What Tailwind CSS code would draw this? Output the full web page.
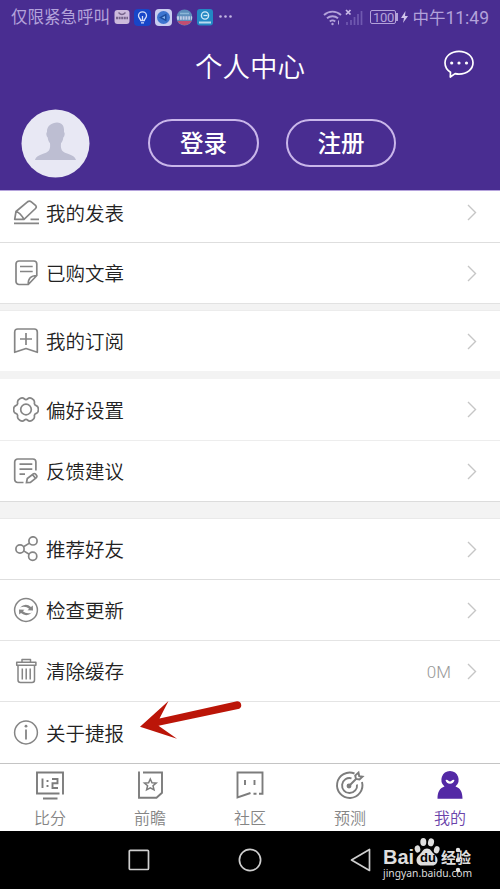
<!DOCTYPE html>
<html lang="zh-CN">
  <head>
    <meta charset="UTF-8" />
    <meta name="viewport" content="width=device-width, initial-scale=1.0" />
    <title>个人中心</title>
    <script src="https://cdn.jsdelivr.net/npm/@tailwindcss/browser@4"></script>
  </head>
  <body class="bg-black font-['Roboto','Noto_Sans_CJK_SC',sans-serif]">
    <div class="w-[500px] h-[889px] flex flex-col overflow-hidden">
      <!-- Header -->
      <header class="h-[190px] shrink-0 bg-[#492d91] text-white">
        <!-- Status bar -->
        <div class="h-[34px] pl-[11px] pr-[11px] flex items-center justify-between text-[#b3a2da] text-[16.5px] leading-none">
          <div class="flex items-center gap-[4px]">
            <span class="whitespace-nowrap pt-[3px]">仅限紧急呼叫</span>
            <svg class="w-4 h-4" viewBox="0 0 16 16">
              <rect x="0.5" y="1" width="15" height="14" rx="3" fill="#cdbbdc" />
              <path d="M4.500 3.500q3.500 4 7 0" fill="none" stroke="#77658c" stroke-width="1.300" />
              <path d="M2 9h12" stroke="#75638a" stroke-width="2.500" stroke-dasharray="2 .6" />
            </svg>
            <svg class="w-[17px] h-[17px]" viewBox="0 0 17 17">
              <rect width="17" height="17" rx="4" fill="#1746c8" />
              <path d="M6.700 11.500C6.700 9.800 4.500 9 4.500 6.800a4 4 0 0 1 8 0c0 2.200-2.200 3-2.200 4.700zM7 13.800h3M8.500 7v4" fill="none" stroke="#d5ddfa" stroke-width="1.300" />
            </svg>
            <svg class="w-[17px] h-[17px]" viewBox="0 0 17 17">
              <rect width="17" height="17" rx="4" fill="#c9cdf0" />
              <circle cx="8.500" cy="8.500" r="6.500" fill="#3d74cf" />
              <path d="M4 8.500 11.500 4.500v8z" fill="#1f4d9f" />
              <path d="M7 8.500l3-1.500v3z" fill="#86b3ef" />
            </svg>
            <svg class="w-[17px] h-[17px]" viewBox="0 0 17 17">
              <circle cx="8.500" cy="8.500" r="8" fill="#5d8dbb" />
              <path d="M1.500 12a8 8 0 0 0 14 0z" fill="#c14d72" />
              <path d="M1 9h15" stroke="#c0cce6" stroke-width="3.500" stroke-dasharray="2 .8" />
              <path d="M4 4.500h9" stroke="#8bb7d8" stroke-width="1.500" />
            </svg>
            <svg class="w-4 h-[17px]" viewBox="0 0 16 17">
              <rect width="16" height="16.500" rx="3" fill="#2388c4" />
              <circle cx="8" cy="6.500" r="3.600" fill="none" stroke="#cfeaf8" stroke-width="1.400" />
              <path d="M6.500 6.500h4" stroke="#cfeaf8" stroke-width="1.300" />
              <path d="M2 13.500h12" stroke="#b8daf0" stroke-width="2" />
            </svg>
            <svg class="w-[16px] h-4" viewBox="0 0 16 16" fill="#c3b5e3">
              <circle cx="3.500" cy="7.500" r="1.300" />
              <circle cx="8.500" cy="7.500" r="1.300" />
              <circle cx="13.500" cy="7.500" r="1.300" />
            </svg>
          </div>
          <div class="flex items-center">
            <svg class="w-[19px] h-[17px] mr-[3px]" viewBox="0 0 19 17" fill="none" stroke="currentColor" stroke-width="1.900">
              <path d="M1 6a12.500 12.500 0 0 1 17 0M4 9.300a8.300 8.300 0 0 1 11 0M6.800 12.500a4.200 4.200 0 0 1 5.400 0" />
              <circle cx="9.500" cy="15" r="1.200" fill="currentColor" stroke="none" />
              <path d="M15.500 11.500v4" stroke-width="1" />
            </svg>
            <svg class="w-[18px] h-[17px] mr-[7px]" viewBox="0 0 18 17" fill="none">
              <path d="M1 1l4.500 4.500M5.500 1 1 5.500" stroke="#cabce8" stroke-width="1.700" />
              <path d="M2 16v-3M6 16v-5M9.500 16V8M13 16V5M16.500 16V2" stroke="#7059b0" stroke-width="1.700" />
            </svg>
            <span class="w-[26px] h-[14px] border border-current rounded-[2px] flex items-center justify-center text-[13px] tracking-[-0.3px]">100</span>
            <span class="w-[2px] h-[8px] bg-current"></span>
            <svg class="w-[7px] h-[12px] ml-[3px] mr-[4px]" viewBox="0 0 7 12" fill="#d0c4ea">
              <path d="M4.500 0 0 7h3L2 12l5-7H4z" />
            </svg>
            <span class="whitespace-nowrap text-[17.5px] pt-[3px]"><span class="text-[16.500px]">中午</span>11:49</span>
          </div>
        </div>

        <!-- Title -->
        <div class="h-[64px] grid grid-cols-[1fr_auto_1fr] items-center pr-[26px]">
          <span></span>
          <h1 class="text-[27.5px] leading-none pl-[26px] pt-[3px] whitespace-nowrap font-[350]">个人中心</h1>
          <svg class="w-[30px] h-[28px] justify-self-end -mt-[5px]" viewBox="0 0 30 28" fill="none" stroke="#fff" stroke-width="1.700">
            <path d="M6.500 22.300C2.900 20 1 16.500 1 12.800 1 6.300 7 1.300 15 1.300s14 5 14 11.500-6 11.300-14 11.300c-1.500 0-2.700-.2-3.900-.5L6.300 27z" stroke-linejoin="round" />
            <g fill="#fff" stroke="none">
              <circle cx="7.700" cy="13" r="1.600" />
              <circle cx="15" cy="13" r="1.600" />
              <circle cx="22.500" cy="13" r="1.600" />
            </g>
          </svg>
        </div>

        <!-- Account -->
        <div class="h-[90px] flex items-center pl-[21px]">
          <svg class="w-[69px] h-[69px]" viewBox="0 0 69 69">
            <circle cx="34.500" cy="34.500" r="34" fill="#e8e8f4" />
            <path d="M36 13.500c5 0 7.500 3.500 7 9.500 1.200 1 .8 4-.7 5.500-.3 3-1.300 4.500-2.300 5.700-.5 5 .5 8 4 9.500 6 2 10 3.500 11 7.300H14c1-3.800 5-5.300 11-7.300 3.500-1.500 4.500-4.500 4-9.500-1-1.200-2-2.700-2.300-5.700-1.500-1.500-1.900-4.500-.7-5.500-.5-6 5-9.500 10-9.500z" fill="#bdbed2" />
          </svg>
          <button class="ml-[58px] w-[111px] h-[48px] rounded-full border-2 border-[#c9b6ea] text-[23.5px] leading-none font-medium flex items-center justify-center pt-[4px]">登录</button>
          <button class="ml-[27px] w-[110px] h-[48px] rounded-full border-2 border-[#c9b6ea] text-[23.5px] leading-none font-medium flex items-center justify-center pt-[4px]">注册</button>
        </div>
      </header>

      <!-- Menu -->
      <main class="h-[573px] shrink-0 bg-[#f3f3f3] text-[19.5px] leading-none text-[#222] font-[350]">
        <section class="bg-white">
          <a class="h-[53px] pl-[13px] pr-[22px] pb-[8px] flex items-center border-t border-t-[#b5a3dc] border-b border-b-[#dedede]">
            <svg class="w-[26px] h-[26px] mr-[7px]" viewBox="0 0 26 26" fill="none" stroke="#858585" stroke-width="1.700" stroke-linejoin="round">
              <path d="M1.700 19.300 3 11.500 14.500 1.800q2-1.500 3.800 0l4.200 3.500q1.500 1.700 0 3.200L11 19.300zM3 11.500q4 1 8 7.800M1 23.300h25M17.500 19.300H26" />
            </svg>
            <span class="grow pt-[4px]">我的发表</span>
            <svg class="w-[10px] h-[17px] mr-px" viewBox="0 0 10 17" fill="none" stroke="#c6c6c6" stroke-width="1.400"><path d="M1 1l7.500 7.500L1 16" /></svg>
          </a>
          <a class="h-[61px] pl-[13px] pr-[22px] flex items-center border-b border-b-[#e2e2e2]">
            <svg class="w-[26px] h-[26px] mr-[7px]" viewBox="0 0 26 26" fill="none" stroke="#858585" stroke-width="1.700">
              <path d="M15.300 24.500H6a3 3 0 0 1-3-3V4a3 3 0 0 1 3-3h14.800a3 3 0 0 1 3 3v11.500zq-.5-9 8.500-9M7 6.500h12.700M7 11.500h12.700" />
            </svg>
            <span class="grow pt-[4px]">已购文章</span>
            <svg class="w-[10px] h-[17px] mr-px" viewBox="0 0 10 17" fill="none" stroke="#c6c6c6" stroke-width="1.400"><path d="M1 1l7.500 7.500L1 16" /></svg>
          </a>
        </section>

        <section class="mt-[6px] bg-white border-t border-t-[#ececec]">
          <a class="h-[60px] pl-[13px] pr-[22px] flex items-center">
            <svg class="w-[26px] h-[26px] mr-[7px]" viewBox="0 0 26 26" fill="none" stroke="#858585" stroke-width="1.700" stroke-linejoin="round">
              <path d="M1.700 24.300V4q0-3 3-3h16.600q3 0 3 3v20.300L13 20.500zM13 5v12M7 11h12" />
            </svg>
            <span class="grow pt-[4px]">我的订阅</span>
            <svg class="w-[10px] h-[17px] mr-px" viewBox="0 0 10 17" fill="none" stroke="#c6c6c6" stroke-width="1.400"><path d="M1 1l7.500 7.500L1 16" /></svg>
          </a>
        </section>

        <section class="mt-[8px] bg-white">
          <a class="h-[62px] pl-[13px] pr-[22px] flex items-center border-b border-b-[#ededed]">
            <svg class="w-[26px] h-[26px] mr-[7px]" viewBox="0 0 26 26" fill="none" stroke="#858585" stroke-width="1.700">
              <g transform="translate(13 12.500)">
                <path d="M10.200-3.850Q12.420-3.100 12.420 0Q12.420 3.100 10.200 3.850Q7.970 4.600 8.430 6.900Q8.890 9.210 6.210 10.750Q3.530 12.300 1.760 10.750Q0 9.200-1.760 10.750Q-3.530 12.300-6.210 10.750Q-8.890 9.210-8.430 6.900Q-7.970 4.600-10.200 3.850Q-12.420 3.100-12.420 0Q-12.420-3.100-10.200-3.850Q-7.970-4.600-8.430-6.900Q-8.890-9.210-6.210-10.750Q-3.530-12.300-1.760-10.750Q0-9.200 1.760-10.750Q3.530-12.300 6.210-10.750Q8.890-9.210 8.430-6.900Q7.970-4.600 10.200-3.850Z" />
                <circle r="5.300" />
              </g>
            </svg>
            <span class="grow pt-[4px]">偏好设置</span>
            <svg class="w-[10px] h-[17px] mr-px" viewBox="0 0 10 17" fill="none" stroke="#c6c6c6" stroke-width="1.400"><path d="M1 1l7.500 7.500L1 16" /></svg>
          </a>
          <a class="h-[61px] pl-[13px] pr-[22px] flex items-center border-b border-b-[#dcdcdc]">
            <svg class="w-[26px] h-[26px] mr-[7px]" viewBox="0 0 26 26" fill="none" stroke="#858585" stroke-width="1.700">
              <path d="M10.500 24.500H4.700a3 3 0 0 1-3-3V4a3 3 0 0 1 3-3h15.200a3 3 0 0 1 3 3v8.500M6.500 6.200h12.800M6.500 11.200h12.800M6.500 16.200H12" />
              <path d="M13.500 24.500l.8-4 6.200-4.700q1.200-.6 2 .2l1.300 1.700q.5 1-.4 1.900l-6 4.700zM19.500 16.700l3.200 3.700" />
            </svg>
            <span class="grow pt-[4px]">反馈建议</span>
            <svg class="w-[10px] h-[17px] mr-px" viewBox="0 0 10 17" fill="none" stroke="#c6c6c6" stroke-width="1.400"><path d="M1 1l7.500 7.500L1 16" /></svg>
          </a>
        </section>

        <section class="mt-[16px] bg-white border-t border-t-[#e9e9e9]">
          <a class="h-[61px] pl-[13px] pr-[22px] flex items-center border-b border-b-[#dedede]">
            <svg class="w-[26px] h-[26px] mr-[7px]" viewBox="0 0 26 26" fill="none" stroke="#858585" stroke-width="1.700">
              <circle cx="7" cy="13" r="4.100" />
              <circle cx="20" cy="4.900" r="4.100" />
              <circle cx="19.700" cy="20.300" r="4.100" />
              <path d="M10.500 10.800l6-3.700M10.700 14.900l5.500 3.400" />
            </svg>
            <span class="grow pt-[4px]">推荐好友</span>
            <svg class="w-[10px] h-[17px] mr-px" viewBox="0 0 10 17" fill="none" stroke="#c6c6c6" stroke-width="1.400"><path d="M1 1l7.500 7.500L1 16" /></svg>
          </a>
          <a class="h-[61px] pl-[13px] pr-[22px] flex items-center border-b border-b-[#e4e4e4]">
            <svg class="w-[26px] h-[26px] mr-[7px]" viewBox="0 0 26 26" fill="none" stroke="#858585" stroke-width="1.500">
              <circle cx="13" cy="13" r="11.400" />
              <path d="M7 10.500q5.500-5 11-.5l1.800-1.500.2 5-5.500-.2 1.700-1.500q-4-3.500-9.200-1.300zM19 15.500q-5.500 5-11 .5l-1.800 1.500-.2-5 5.500.2-1.700 1.500q4 3.500 9.200 1.300z" fill="#858585" stroke="none" />
            </svg>
            <span class="grow pt-[4px]">检查更新</span>
            <svg class="w-[10px] h-[17px] mr-px" viewBox="0 0 10 17" fill="none" stroke="#c6c6c6" stroke-width="1.400"><path d="M1 1l7.500 7.500L1 16" /></svg>
          </a>
          <a class="h-[61px] pl-[13px] pr-[22px] flex items-center border-b border-b-[#e4e4e4]">
            <svg class="w-[26px] h-[26px] mr-[7px]" viewBox="0 0 26 26" fill="none" stroke="#858585" stroke-width="1.500" stroke-linejoin="round">
              <path d="M3.700 4.300h19.200v3H3.700zM9 4.300V1.500h8.500v2.800M5 7.300V22q0 2.500 2.500 2.500H19q2.500 0 2.500-2.500V7.300M9.300 10.500v11M13.200 10.500v11M17.200 10.500v11" />
            </svg>
            <span class="grow pt-[4px]">清除缓存</span>
            <span class="text-[17px] text-[#999] mr-[16px] pt-[2px]">0M</span>
            <svg class="w-[10px] h-[17px] mr-px" viewBox="0 0 10 17" fill="none" stroke="#c6c6c6" stroke-width="1.400"><path d="M1 1l7.500 7.500L1 16" /></svg>
          </a>
          <a class="relative h-[61px] pl-[13px] pr-[22px] flex items-center">
            <svg class="w-[26px] h-[26px] mr-[7px]" viewBox="0 0 26 26" fill="none" stroke="#858585" stroke-width="1.500">
              <circle cx="13" cy="12.500" r="11.400" />
              <path d="M13 9.500v10" stroke-width="1.800" />
              <circle cx="13" cy="6.200" r="1.400" fill="#858585" stroke="none" />
            </svg>
            <span class="grow pt-[4px]">关于捷报</span>
            <!-- Pointer arrow -->
            <svg class="absolute left-[138px] -top-[3px] w-[106px] h-[42px]" viewBox="138 699 106 42">
              <path d="M140 726.700 168.500 701 159.500 718.500 237 701.300A4 4 0 0 1 239.300 708.700L158.500 725.700 177 738.700z" fill="#bb1508" />
            </svg>
          </a>
        </section>
      </main>

      <!-- Tab bar -->
      <nav class="h-[68px] shrink-0 bg-white border-t border-t-[#c4c4c4] grid grid-cols-5 text-[16px] leading-none font-[350] text-[#858585]">
        <a class="flex flex-col items-center pt-[6px] gap-[11px]">
          <svg class="w-[30px] h-[30px]" viewBox="0 0 30 30" fill="none" stroke="#7c7c7c" stroke-width="1.900">
            <path d="M24.500 23.500H2V2.500h26v22M8 28.500h14.500" />
            <path d="M7.500 8.500v9.500M17 9h5.500v4.200h-5V18H23" />
            <path d="M12.500 10v2M12.500 15v2" />
          </svg>
          <span>比分</span>
        </a>
        <a class="flex flex-col items-center pt-[6px] gap-[11px]">
          <svg class="w-[30px] h-[30px]" viewBox="0 0 30 30" fill="none" stroke="#7c7c7c" stroke-width="1.900">
            <path d="M4 1.500v26.300h17.500l5.500-5V2.500H8" />
            <path d="M15.300 9l1.700 3.700 4.200.4-3.200 2.700 1 4-3.700-2-3.700 2 1-4-3.200-2.700 4.200-.4z" stroke-width="1.500" />
          </svg>
          <span>前瞻</span>
        </a>
        <a class="flex flex-col items-center pt-[6px] gap-[11px]">
          <svg class="w-[30px] h-[30px]" viewBox="0 0 30 30" fill="none" stroke="#7c7c7c" stroke-width="1.900">
            <path d="M15.500 23 2.500 27.500v-25h25v21.200h-3.500M18.500 23.700h3" />
            <path d="M10 10v5M19.500 10v5" />
          </svg>
          <span>社区</span>
        </a>
        <a class="flex flex-col items-center pt-[6px] gap-[11px]">
          <svg class="w-[30px] h-[30px]" viewBox="0 0 30 30" fill="none" stroke="#7c7c7c" stroke-width="1.900">
            <path d="M19.500 3.500A12.700 12.700 0 1 0 27 12M16.500 8.300A7.500 7.500 0 1 0 22 14.500" />
            <path d="M13 17l8-8M21 9l-.8-3.500L23.500 2.500l.7 3.700 3.300.5-3 2.800z" />
            <circle cx="14" cy="16" r="1.500" fill="#7c7c7c" />
          </svg>
          <span>预测</span>
        </a>
        <a class="flex flex-col items-center pt-[6px] gap-[11px] text-[#6a43aa]">
          <svg class="w-[30px] h-[30px]" viewBox="0 0 30 30">
            <path d="M15 1a8.800 8.800 0 0 1 5.500 15.500c4.500 1.500 7 5 7 12.200h-25c0-7.200 2.500-10.700 7-12.200A8.800 8.800 0 0 1 15 1z" fill="#5329a5" />
            <path d="M10.500 10q1.500-.8 3 .8 1.500 1.200 3 0 1.500-1.600 3-.8-.8 3.700-4.500 3.700t-4.500-3.700z" fill="#fff" />
          </svg>
          <span>我的</span>
        </a>
      </nav>

      <!-- System navigation -->
      <footer class="relative h-[58px] shrink-0 bg-black">
        <div class="h-full pl-[128px] flex items-center">
          <svg class="w-[22px] h-[22px]" viewBox="0 0 22 22" fill="none" stroke="#cfcfcf" stroke-width="1.700"><rect x="1.300" y="1.300" width="19.200" height="19.200" rx="1" /></svg>
          <svg class="w-[24px] h-[24px] ml-[88px]" viewBox="0 0 24 24" fill="none" stroke="#cfcfcf" stroke-width="1.700"><circle cx="12" cy="12" r="10.600" /></svg>
          <svg class="w-[22px] h-[24px] ml-[88px]" viewBox="0 0 22 24" fill="none" stroke="#cfcfcf" stroke-width="1.700" stroke-linejoin="round"><path d="M19.500 1.500v21L1.500 12z" /></svg>
          <svg class="w-[6px] h-[26px] ml-[83px]" viewBox="0 0 6 26" fill="#e8e8e8">
            <circle cx="3" cy="3" r="2.200" /><circle cx="3" cy="13" r="2.200" /><circle cx="3" cy="23" r="2.200" />
          </svg>
        </div>
        <!-- Baidu watermark -->
        <div class="absolute left-[383px] top-[5px] w-[92px] text-[#dedede]">
          <div class="h-[31px] flex items-end">
            <span class="w-[31px] text-[20px] leading-[19px] font-bold font-['Liberation_Sans']">Bai</span>
            <span class="relative w-[24px] h-[30px]">
              <svg class="w-[27px] h-[30px]" viewBox="0 0 27 30" fill="#dedede">
                <ellipse cx="3.500" cy="12" rx="2.800" ry="3.700" transform="rotate(-12 3.500 12)" />
                <ellipse cx="9.300" cy="5" rx="3" ry="4" />
                <ellipse cx="17" cy="5.300" rx="3" ry="4" transform="rotate(12 17 5.300)" />
                <ellipse cx="22.700" cy="12.700" rx="2.800" ry="3.700" transform="rotate(16 22.700 12.700)" />
                <path d="M13 11.500c3.500 0 4.500 3 6.500 5s4 3.500 4 6.500-2 5.500-5 5.500H7.500c-3 0-5-2.500-5-5.500s2-4.500 4-6.500 3-5 6.500-5z" />
              </svg>
              <span class="absolute left-[6px] top-[14px] text-[13px] leading-none font-bold text-black font-['Liberation_Sans']">du</span>
            </span>
            <span class="ml-[3px] text-[15px] leading-[18px] font-bold whitespace-nowrap">经验</span>
          </div>
          <div class="text-[10.3px] leading-[12px] whitespace-nowrap font-['Noto_Sans']">jingyan.baidu.com</div>
        </div>
      </footer>
    </div>
  </body>
</html>
